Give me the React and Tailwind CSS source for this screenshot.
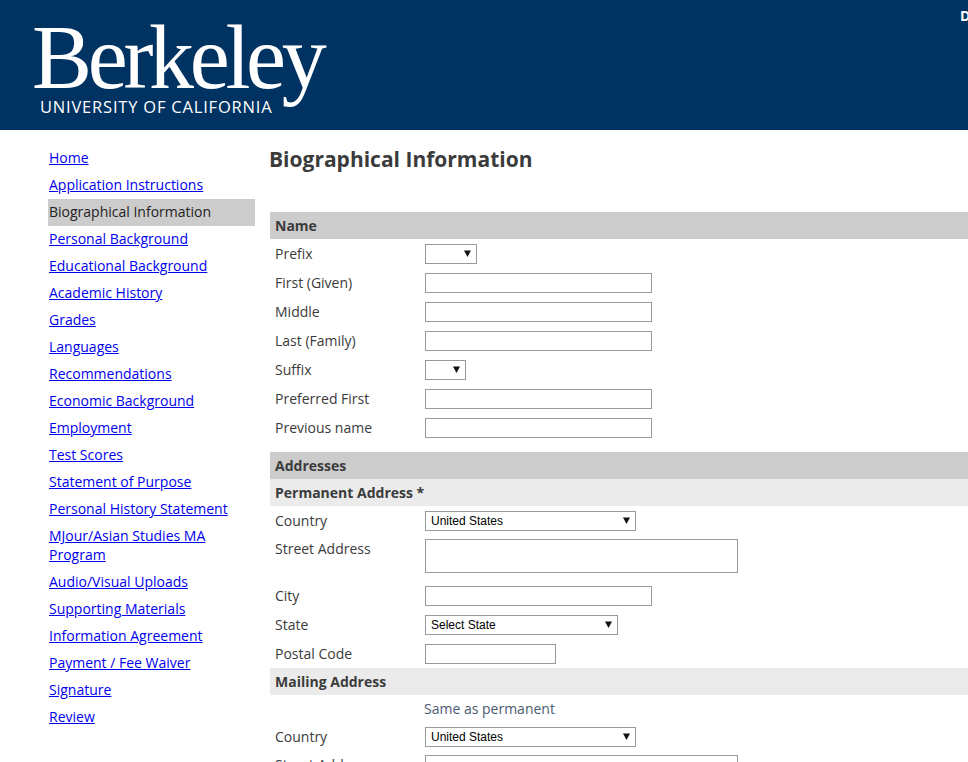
import React from 'react';

const navItems = [
  'Home',
  'Application Instructions',
  'Biographical Information',
  'Personal Background',
  'Educational Background',
  'Academic History',
  'Grades',
  'Languages',
  'Recommendations',
  'Economic Background',
  'Employment',
  'Test Scores',
  'Statement of Purpose',
  'Personal History Statement',
  'MJour/Asian Studies MA Program',
  'Audio/Visual Uploads',
  'Supporting Materials',
  'Information Agreement',
  'Payment / Fee Waiver',
  'Signature',
  'Review',
];

function Select({ width, label }) {
  return (
    <div className={`relative h-5 ${width}`}>
      <select className="block h-5 w-full appearance-none rounded-none border border-[#999] bg-white pl-[5px] font-['Liberation_Sans',sans-serif] text-xs text-black outline-none">
        <option>{label}</option>
      </select>
      <svg className="absolute top-[6px] right-[6px] h-[7px] w-[7px]" viewBox="0 0 7 7">
        <path d="M0 0.5h7L3.5 7z" fill="#111" />
      </svg>
    </div>
  );
}

function TextInput({ width = 'w-[227px]' }) {
  return <input type="text" className={`block h-5 rounded-none border border-[#999] bg-white outline-none ${width}`} />;
}

function Row({ label, children, height = 'h-[29px]' }) {
  return (
    <div className={`flex pt-[5px] pl-[5px] ${height}`}>
      <div className="h-5 w-[150px] shrink-0 leading-5">{label}</div>
      {children}
    </div>
  );
}

function SectionHeader({ children }) {
  return <div className="h-[27px] bg-[#ccc] pl-[5px] leading-[27px] font-bold">{children}</div>;
}

function SubHeader({ children }) {
  return <div className="h-[27px] bg-[#ebebeb] pl-[5px] leading-[27px] font-bold">{children}</div>;
}

export default function App() {
  return (
    <div className="h-screen w-[968px] overflow-hidden bg-white font-['Open_Sans',sans-serif] text-sm text-[#3b3b3b]">
      {/* Header */}
      <div className="relative flex h-[130px] bg-[#003262] text-white">
        <div className="ml-[32px] flex w-[300px] flex-col pt-[18px]">
          <div className="h-[80px] font-['Liberation_Serif',serif] text-[90px] leading-[80px] tracking-[-4.3px]">Berkeley</div>
          <div className="ml-[8px] text-[16.5px] leading-[18px] font-medium tracking-[0.8px] whitespace-nowrap">UNIVERSITY OF CALIFORNIA</div>
        </div>
        <div className="absolute top-[6px] left-[960px] font-bold">D</div>
      </div>

      <div className="flex">
        {/* Sidebar */}
        <div className="mt-[15px] ml-[48px] w-[207px] shrink-0">
          {navItems.map((item) =>
            item === 'Biographical Information' ? (
              <div key={item} className="bg-[#ccc] pt-[3px] pb-[5px] pl-px leading-[19px] text-[#222]">{item}</div>
            ) : (
              <div key={item} className="pt-[3px] pb-[5px] pl-px leading-[19px]">
                <a href="#" className="text-[#00e] underline">{item}</a>
              </div>
            )
          )}
        </div>

        {/* Main */}
        <div className="ml-[15px] flex-1">
          <h1 className="mt-[14px] mb-[38px] -ml-px h-[30px] text-[21px] leading-[30px] font-bold">Biographical Information</h1>

          <SectionHeader>Name</SectionHeader>
          <Row label="Prefix"><Select width="w-[52px]" label="" /></Row>
          <Row label="First (Given)"><TextInput /></Row>
          <Row label="Middle"><TextInput /></Row>
          <Row label="Last (Family)"><TextInput /></Row>
          <Row label="Suffix"><Select width="w-[41px]" label="" /></Row>
          <Row label="Preferred First"><TextInput /></Row>
          <Row label="Previous name"><TextInput /></Row>

          <div className="mt-[10px]">
            <SectionHeader>Addresses</SectionHeader>
            <SubHeader>Permanent Address *</SubHeader>
            <Row label="Country" height="h-[28px]"><Select width="w-[211px]" label="United States" /></Row>
            <Row label="Street Address" height="h-[47px]">
              <textarea className="block h-[34px] w-[313px] resize-none rounded-none border border-[#999] bg-white outline-none" />
            </Row>
            <Row label="City"><TextInput /></Row>
            <Row label="State"><Select width="w-[193px]" label="Select State" /></Row>
            <Row label="Postal Code"><TextInput width="w-[131px]" /></Row>
            <SubHeader>Mailing Address</SubHeader>
            <Row label="" height="h-[27px]">
              <div className="-mt-px -ml-px leading-5 text-[#4a5a70]">Same as permanent</div>
            </Row>
            <Row label="Country" height="h-[28px]"><Select width="w-[211px]" label="United States" /></Row>
            <Row label="Street Address" height="h-[47px]">
              <textarea className="block h-[34px] w-[313px] resize-none rounded-none border border-[#999] bg-white outline-none" />
            </Row>
          </div>
        </div>
      </div>
    </div>
  );
}
